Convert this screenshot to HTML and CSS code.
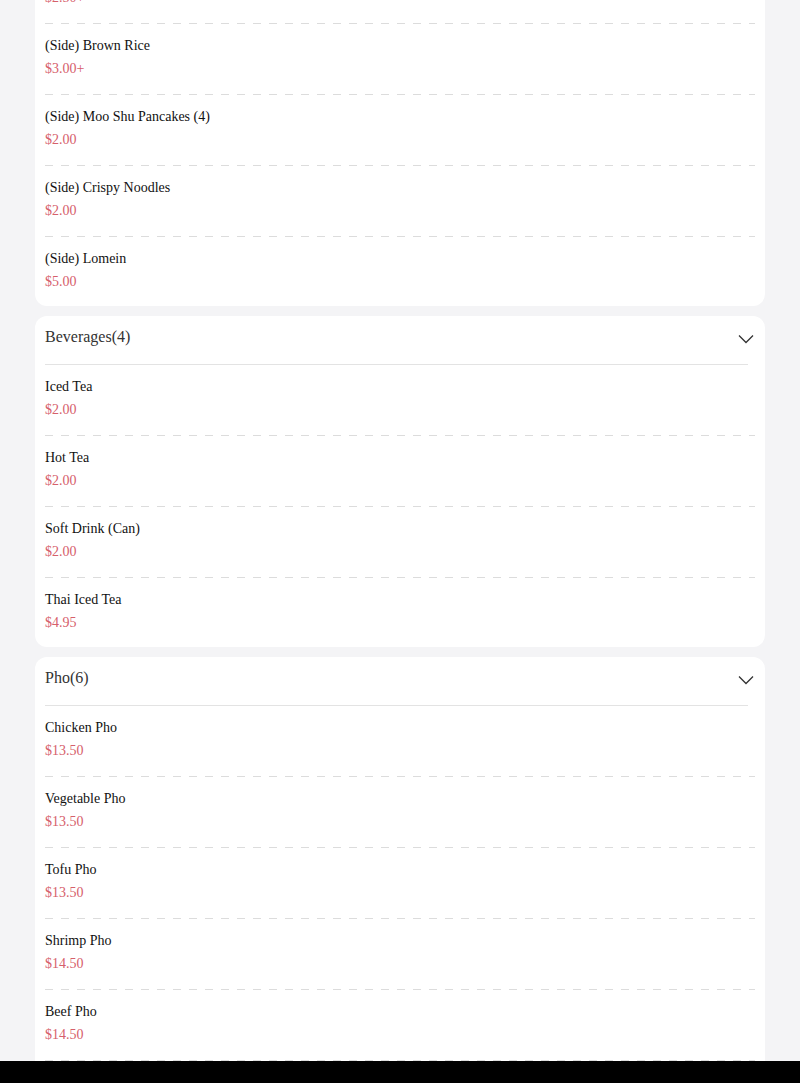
FILE: index.html
```html
<!DOCTYPE html>
<html lang="en">
<head>
<meta charset="utf-8">
<title>Menu</title>
<link rel="stylesheet" href="styles.css">
</head>
<body>
<div class="menu">
  <section class="card card-first">
    <div class="item"><div class="name">(Side) White Rice</div><div class="price">$2.50+</div></div>
    <div class="item"><div class="name">(Side) Brown Rice</div><div class="price">$3.00+</div></div>
    <div class="item"><div class="name">(Side) Moo Shu Pancakes (4)</div><div class="price">$2.00</div></div>
    <div class="item"><div class="name">(Side) Crispy Noodles</div><div class="price">$2.00</div></div>
    <div class="item"><div class="name">(Side) Lomein</div><div class="price">$5.00</div></div>
  </section>

  <section class="card">
    <div class="head">
      <span class="title">Beverages(4)</span>
      <svg class="chev" width="16" height="10" viewBox="0 0 16 10"><polyline points="1,1.5 8,8.5 15,1.5" fill="none" stroke="#333" stroke-width="1.3"/></svg>
    </div>
    <div class="head-line"></div>
    <div class="item"><div class="name">Iced Tea</div><div class="price">$2.00</div></div>
    <div class="item"><div class="name">Hot Tea</div><div class="price">$2.00</div></div>
    <div class="item"><div class="name">Soft Drink (Can)</div><div class="price">$2.00</div></div>
    <div class="item"><div class="name">Thai Iced Tea</div><div class="price">$4.95</div></div>
  </section>

  <section class="card">
    <div class="head">
      <span class="title">Pho(6)</span>
      <svg class="chev" width="16" height="10" viewBox="0 0 16 10"><polyline points="1,1.5 8,8.5 15,1.5" fill="none" stroke="#333" stroke-width="1.3"/></svg>
    </div>
    <div class="head-line"></div>
    <div class="item"><div class="name">Chicken Pho</div><div class="price">$13.50</div></div>
    <div class="item"><div class="name">Vegetable Pho</div><div class="price">$13.50</div></div>
    <div class="item"><div class="name">Tofu Pho</div><div class="price">$13.50</div></div>
    <div class="item"><div class="name">Shrimp Pho</div><div class="price">$14.50</div></div>
    <div class="item"><div class="name">Beef Pho</div><div class="price">$14.50</div></div>
    <div class="item"><div class="name">Seafood Pho</div><div class="price">$15.50</div></div>
  </section>
</div>
<div class="bottom-bar"></div>
</body>
</html>
```
FILE: styles.css
```css
html, body {
  margin: 0;
  padding: 0;
}
body {
  background: #f4f4f6;
  font-family: "Liberation Serif", "Times New Roman", serif;
  color: #111;
}
.menu {
  display: flex;
  flex-direction: column;
  gap: 10px;
  padding: 0 35px;
  margin-top: -47px;
}
.card {
  background: #fff;
  border-radius: 12px;
  padding: 0 10px;
}
.card-first {
  border-top-left-radius: 0;
  border-top-right-radius: 0;
}
.head {
  display: flex;
  justify-content: space-between;
  align-items: center;
  padding-top: 11px;
  height: 20px;
  padding-bottom: 17px;
}
.title {
  font-size: 16px;
  line-height: 20px;
  color: #333;
}
.chev {
  margin-top: 4px;
  margin-right: 1px;
}
.head-line {
  height: 1px;
  background: #e3e3e3;
  margin-right: 7px;
}
.item {
  padding: 12px 0 16px;
  display: flex;
  flex-direction: column;
  gap: 3px;
  background-image: repeating-linear-gradient(to right, #dcdcdc 0 8px, transparent 8px 16px);
  background-size: 100% 1px;
  background-repeat: no-repeat;
  background-position: left bottom;
}
.item:last-child {
  background-image: none;
  padding-bottom: 14px;
}
.name {
  font-size: 14px;
  line-height: 20px;
  color: #111;
}
.price {
  font-size: 14px;
  line-height: 20px;
  color: #d6606b;
}
.bottom-bar {
  position: fixed;
  left: 0;
  right: 0;
  bottom: 0;
  height: 22px;
  background: #000;
}
```
